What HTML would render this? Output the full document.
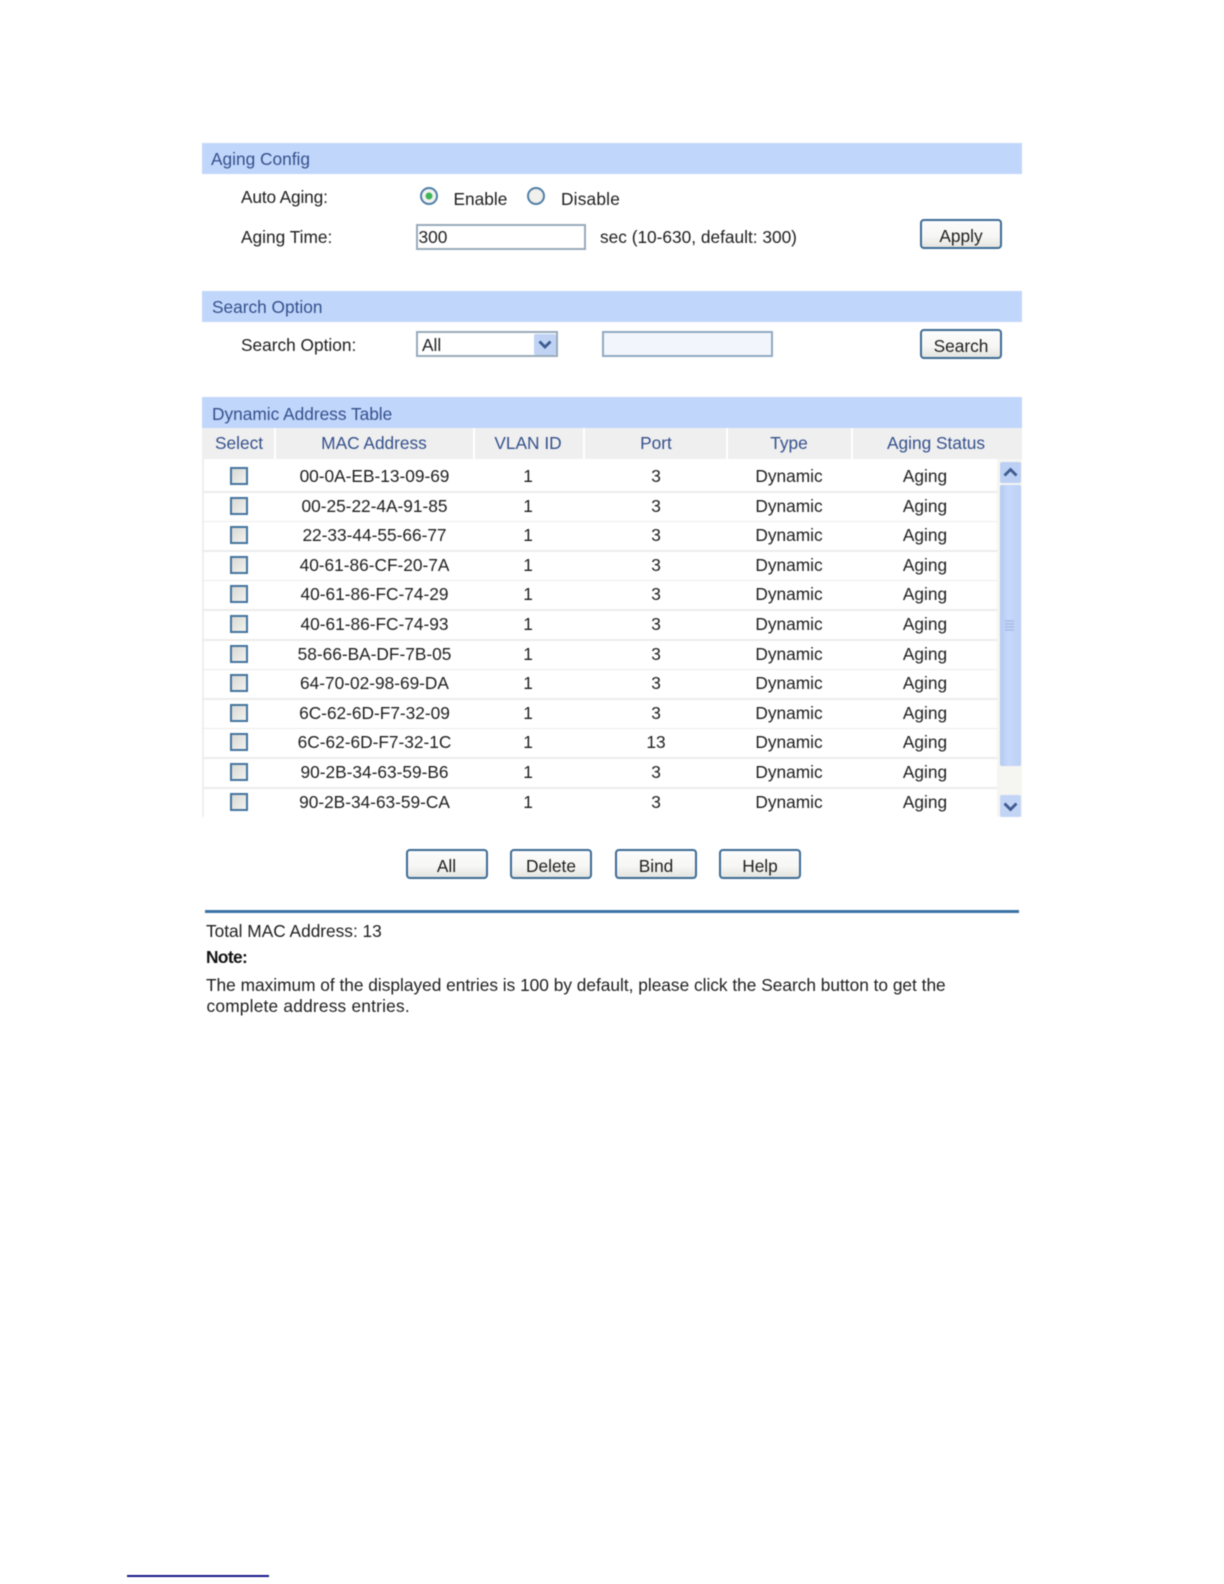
<!DOCTYPE html>
<html><head><meta charset="utf-8"><title>Dynamic Address Table</title>
<style>
html,body{margin:0;padding:0;background:#fff}
#p{position:relative;width:1224px;height:1584px;overflow:hidden;background:#fff;font-family:"Liberation Sans",Arial,sans-serif;font-size:17.3px;color:#1e1e1e;filter:blur(.4px)}
#p div{position:absolute}
.t{line-height:20px;height:20px;white-space:nowrap}
.c{width:200px;text-align:center}
.bar{left:202px;width:820px;height:31px;background:#c1d6fb}
.h{color:#34508c}
.hc{top:428px;height:31px;background:#efefef}
.btn{width:82px;height:30px;box-sizing:border-box;border:2px solid #3c6a94;border-radius:4px;background:linear-gradient(#fcfcfc 0%,#f6f6f4 60%,#e4e4e0 100%);text-align:center;line-height:29px;color:#1e1e1e}
.in{border:2px solid #98abbb;box-sizing:border-box;background:#fff}
.r{left:202px;width:795px;height:29px}
.sep{left:0;top:25px;width:795px;height:1.500px;background:#ececec}
.cb{left:28px;top:1px;width:18px;height:18px;box-sizing:border-box;border:2px solid #44749e;background:linear-gradient(135deg,#d8d8d4,#f2f2f0)}
.m{left:72.500px}.v{left:226px}.o{left:354px}.y{left:487px}.g{left:623px}
</style></head><body><div id="p">

<div class="bar" style="top:143px"></div>
<div class="t h" style="left:211px;top:149px">Aging Config</div>
<div class="t" style="left:241px;top:187px;letter-spacing:-.15px">Auto Aging:</div>
<svg style="position:absolute;left:418px;top:185px" width="130" height="22">
<circle cx="11" cy="11" r="8" fill="#f2f2ee" stroke="#4f7ea8" stroke-width="2"/><circle cx="11" cy="11" r="3.500" fill="#3fb55a"/>
<circle cx="118" cy="11" r="8" fill="#f0f0ec" stroke="#4f7ea8" stroke-width="2"/></svg>
<div class="t" style="left:453.500px;top:189px">Enable</div>
<div class="t" style="left:561px;top:189px;letter-spacing:.2px">Disable</div>
<div class="t" style="left:241px;top:227px">Aging Time:</div>
<div class="in" style="left:416px;top:224px;width:170px;height:26px"></div>
<div class="t" style="left:418.500px;top:227px">300</div>
<div class="t" style="left:600px;top:227px">sec (10-630, default: 300)</div>
<div class="btn" style="left:920px;top:219px;line-height:30px">Apply</div>

<div class="bar" style="top:291px"></div>
<div class="t h" style="left:212px;top:297px">Search Option</div>
<div class="t" style="left:241px;top:335px">Search Option:</div>
<div class="in" style="left:416px;top:331px;width:142px;height:26px"></div>
<div class="t" style="left:422px;top:335px">All</div>
<div style="left:534px;top:334px;width:22px;height:21px;background:#c0d3f5;border-radius:2px"></div>
<svg style="position:absolute;left:534px;top:334px" width="22" height="21"><path d="M5.500 7.500L11 13L16.500 7.500" fill="none" stroke="#3d5c8f" stroke-width="2.800"/></svg>
<div class="in" style="left:602px;top:331px;width:171px;height:26px;background:#f2f5fc;border-color:#8fa9c2"></div>
<div class="btn" style="left:920px;top:329px;line-height:31px">Search</div>

<div class="bar" style="top:397px"></div>
<div class="t h" style="left:212px;top:403.500px">Dynamic Address Table</div>
<div class="hc" style="left:202px;width:72px"></div>
<div class="hc" style="left:276px;width:197px"></div>
<div class="hc" style="left:475px;width:108px"></div>
<div class="hc" style="left:585px;width:141px"></div>
<div class="hc" style="left:728px;width:123px"></div>
<div class="hc" style="left:853px;width:169px"></div>
<div class="t c h" style="left:139px;top:433px">Select</div>
<div class="t c h" style="left:274px;top:433px">MAC Address</div>
<div class="t c h" style="left:428px;top:433px">VLAN ID</div>
<div class="t c h" style="left:556px;top:433px">Port</div>
<div class="t c h" style="left:689px;top:433px">Type</div>
<div class="t c h" style="left:836px;top:433px">Aging Status</div>
<div style="left:202px;top:459px;width:2px;height:358px;background:#efefef"></div>

<div class="r" style="top:466px"><div class="sep"></div><div class="cb"></div><div class="t c m">00-0A-EB-13-09-69</div><div class="t c v">1</div><div class="t c o">3</div><div class="t c y">Dynamic</div><div class="t c g">Aging</div></div>
<div class="r" style="top:495.600px"><div class="sep"></div><div class="cb"></div><div class="t c m">00-25-22-4A-91-85</div><div class="t c v">1</div><div class="t c o">3</div><div class="t c y">Dynamic</div><div class="t c g">Aging</div></div>
<div class="r" style="top:525.200px"><div class="sep"></div><div class="cb"></div><div class="t c m">22-33-44-55-66-77</div><div class="t c v">1</div><div class="t c o">3</div><div class="t c y">Dynamic</div><div class="t c g">Aging</div></div>
<div class="r" style="top:554.800px"><div class="sep"></div><div class="cb"></div><div class="t c m">40-61-86-CF-20-7A</div><div class="t c v">1</div><div class="t c o">3</div><div class="t c y">Dynamic</div><div class="t c g">Aging</div></div>
<div class="r" style="top:584.400px"><div class="sep"></div><div class="cb"></div><div class="t c m">40-61-86-FC-74-29</div><div class="t c v">1</div><div class="t c o">3</div><div class="t c y">Dynamic</div><div class="t c g">Aging</div></div>
<div class="r" style="top:614px"><div class="sep"></div><div class="cb"></div><div class="t c m">40-61-86-FC-74-93</div><div class="t c v">1</div><div class="t c o">3</div><div class="t c y">Dynamic</div><div class="t c g">Aging</div></div>
<div class="r" style="top:643.600px"><div class="sep"></div><div class="cb"></div><div class="t c m">58-66-BA-DF-7B-05</div><div class="t c v">1</div><div class="t c o">3</div><div class="t c y">Dynamic</div><div class="t c g">Aging</div></div>
<div class="r" style="top:673.200px"><div class="sep"></div><div class="cb"></div><div class="t c m">64-70-02-98-69-DA</div><div class="t c v">1</div><div class="t c o">3</div><div class="t c y">Dynamic</div><div class="t c g">Aging</div></div>
<div class="r" style="top:702.800px"><div class="sep"></div><div class="cb"></div><div class="t c m">6C-62-6D-F7-32-09</div><div class="t c v">1</div><div class="t c o">3</div><div class="t c y">Dynamic</div><div class="t c g">Aging</div></div>
<div class="r" style="top:732.400px"><div class="sep"></div><div class="cb"></div><div class="t c m">6C-62-6D-F7-32-1C</div><div class="t c v">1</div><div class="t c o">13</div><div class="t c y">Dynamic</div><div class="t c g">Aging</div></div>
<div class="r" style="top:762px"><div class="sep"></div><div class="cb"></div><div class="t c m">90-2B-34-63-59-B6</div><div class="t c v">1</div><div class="t c o">3</div><div class="t c y">Dynamic</div><div class="t c g">Aging</div></div>
<div class="r" style="top:791.600px"><div class="cb"></div><div class="t c m">90-2B-34-63-59-CA</div><div class="t c v">1</div><div class="t c o">3</div><div class="t c y">Dynamic</div><div class="t c g">Aging</div></div>

<div style="left:997px;top:459px;width:25px;height:358px;background:#f5f5f1"></div>
<div style="left:1000px;top:462px;width:21px;height:21px;background:#bcd0f5;border-radius:2px"></div>
<svg style="position:absolute;left:1000px;top:462px" width="21" height="21"><path d="M4.500 13.500L10.500 7.500L16.500 13.500" fill="none" stroke="#3d5c8f" stroke-width="2.800"/></svg>
<div style="left:1000px;top:485px;width:21px;height:281px;background:linear-gradient(90deg,#b4caf3,#c6d8fa 40%,#bdd1f6);border-radius:2px"></div>
<svg style="position:absolute;left:1005px;top:620px" width="10" height="12"><path d="M0 1H9M0 4H9M0 7H9M0 10H9" stroke="#a3b9e3" stroke-width="1.200"/></svg>
<div style="left:1000px;top:795px;width:21px;height:22px;background:#c3d5f7;border-radius:2px"></div>
<svg style="position:absolute;left:1000px;top:795px" width="21" height="22"><path d="M4.500 8.500L10.500 14.500L16.500 8.500" fill="none" stroke="#3d5c8f" stroke-width="2.800"/></svg>

<div class="btn" style="left:405.500px;top:849px;line-height:31px">All</div>
<div class="btn" style="left:510px;top:849px;line-height:31px">Delete</div>
<div class="btn" style="left:615px;top:849px;line-height:31px">Bind</div>
<div class="btn" style="left:719px;top:849px;line-height:31px">Help</div>

<div style="left:205px;top:910px;width:814px;height:3px;background:#3a72a4"></div>
<div class="t" style="left:206px;top:921px">Total MAC Address: 13</div>
<div class="t" style="left:206px;top:947px;font-weight:bold;letter-spacing:-.6px;color:#111">Note:</div>
<div class="t" style="left:206px;top:975px">The maximum of the displayed entries is 100 by default, please click the Search button to get the</div>
<div class="t" style="left:206.500px;top:996px;letter-spacing:.22px">complete address entries.</div>

<div style="left:127px;top:1575px;width:142px;height:1.500px;background:#14148c"></div>
</div></body></html>
